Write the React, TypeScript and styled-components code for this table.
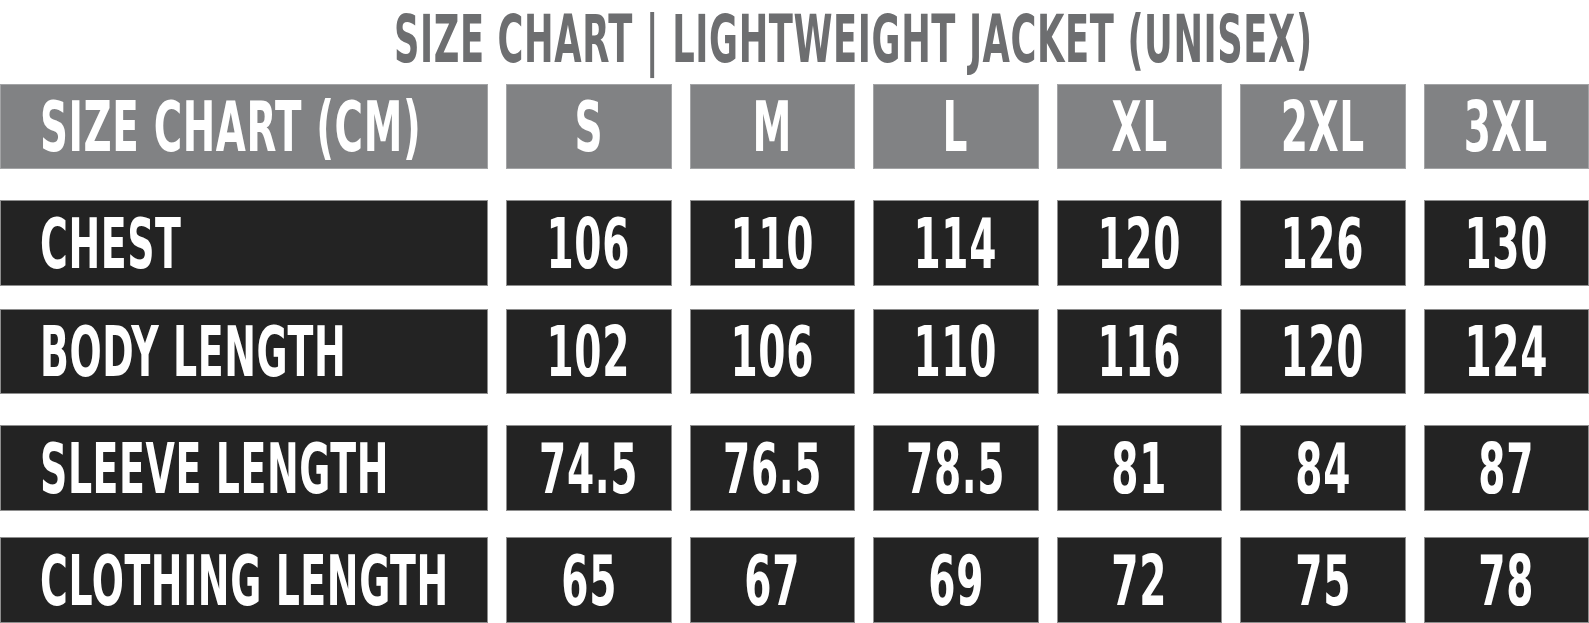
import React from "react";
import styled, { createGlobalStyle } from "styled-components";

const GlobalStyle = createGlobalStyle`
  html, body {
    margin: 0;
    padding: 0;
    background: #ffffff;
  }
  body {
    width: 1589px;
    height: 623px;
    overflow: hidden;
    font-family: "DejaVu Sans Condensed", "DejaVu Sans", sans-serif;
  }
`;

const Page = styled.div`
  width: 1589px;
  height: 623px;
  display: flex;
  flex-direction: column;
  background: #ffffff;
  overflow: hidden;
`;

const TitleBar = styled.header`
  height: 84px;
  display: flex;
  align-items: center;
  padding-left: 394px;
  box-sizing: border-box;
`;

const Condensed = styled.span<{ $origin?: "left" | "center"; $scale?: number }>`
  display: inline-block;
  white-space: nowrap;
  font-family: "DejaVu Sans Condensed", "DejaVu Sans", sans-serif;
  font-weight: 700;
  transform: scaleX(${(p) => p.$scale ?? 0.63});
  transform-origin: ${(p) => (p.$origin === "left" ? "left center" : "center center")};
`;

const Title = styled(Condensed)`
  font-size: 66px;
  line-height: 1;
  color: #6d6e70;
  letter-spacing: 1px;
  margin-top: -4px;
`;

const Table = styled.div`
  display: flex;
  flex-direction: column;
`;

const Row = styled.div<{ $top: number; $height: number }>`
  display: grid;
  grid-template-columns: 488px repeat(6, 1fr);
  column-gap: 18px;
  margin-top: ${(p) => p.$top}px;
  height: ${(p) => p.$height}px;
`;

const Cell = styled.div<{ $head?: boolean; $label?: boolean }>`
  box-sizing: border-box;
  display: flex;
  align-items: center;
  justify-content: ${(p) => (p.$label ? "flex-start" : "center")};
  padding-left: ${(p) => (p.$label ? "39px" : "0")};
  background: ${(p) => (p.$head ? "#818284" : "#232323")};
  border: 1px solid ${(p) => (p.$head ? "#a3a4a6" : "#8e8e8e")};
  color: #ffffff;
  overflow: hidden;
`;

const CellText = styled(Condensed)`
  font-size: 69px;
  line-height: 1;
  letter-spacing: 1px;
  margin-top: 2px;
`;

const sizes = ["S", "M", "L", "XL", "2XL", "3XL"];

const rows: { label: string; values: string[]; top: number; height: number }[] = [
  { label: "CHEST", values: ["106", "110", "114", "120", "126", "130"], top: 31, height: 86 },
  { label: "BODY LENGTH", values: ["102", "106", "110", "116", "120", "124"], top: 23, height: 85 },
  { label: "SLEEVE LENGTH", values: ["74.5", "76.5", "78.5", "81", "84", "87"], top: 31, height: 86 },
  { label: "CLOTHING LENGTH", values: ["65", "67", "69", "72", "75", "78"], top: 26, height: 86 },
];

export default function App() {
  return (
    <Page>
      <GlobalStyle />
      <TitleBar>
        <Title $origin="left" $scale={0.595}>
          SIZE CHART | LIGHTWEIGHT JACKET (UNISEX)
        </Title>
      </TitleBar>
      <Table>
        <Row $top={0} $height={85}>
          <Cell $head $label>
            <CellText $origin="left" $scale={0.625}>
              SIZE CHART (CM)
            </CellText>
          </Cell>
          {sizes.map((s) => (
            <Cell $head key={s}>
              <CellText>{s}</CellText>
            </Cell>
          ))}
        </Row>
        {rows.map((r) => (
          <Row key={r.label} $top={r.top} $height={r.height}>
            <Cell $label>
              <CellText $origin="left" $scale={0.61}>
                {r.label}
              </CellText>
            </Cell>
            {r.values.map((v, i) => (
              <Cell key={i}>
                <CellText>{v}</CellText>
              </Cell>
            ))}
          </Row>
        ))}
      </Table>
    </Page>
  );
}
